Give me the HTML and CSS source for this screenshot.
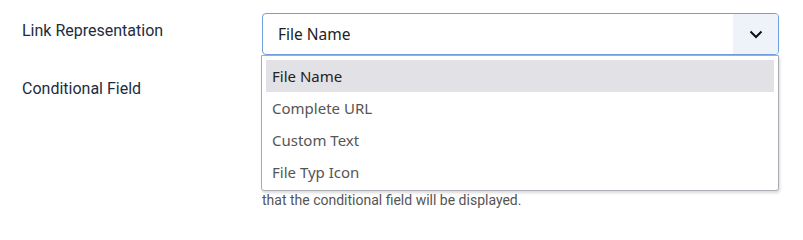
FILE: index.html
```html
<!DOCTYPE html>
<html lang="en">
<head>
  <meta charset="UTF-8" />
  <title>Field Settings</title>
  <link rel="stylesheet" href="styles.css">
</head>
<body>

  <!-- Settings form -->
  <div class="settings-form">
    <div class="form-row">
      <label class="form-label">Link Representation</label>
      <div class="form-control select-wrap">
        <div class="select is-open">
          <span class="select-value">File Name</span>
          <span class="select-arrow">
            <svg width="16" height="16" viewBox="0 0 16 16"><polyline points="2.5,5.5 8,11 13.5,5.5" fill="none" stroke="#111" stroke-width="2"/></svg>
          </span>
        </div>
        <ul class="dropdown">
          <li class="active">File Name</li>
          <li>Complete URL</li>
          <li>Custom Text</li>
          <li>File Typ Icon</li>
        </ul>
      </div>
    </div>

    <div class="form-row">
      <label class="form-label">Conditional Field</label>
      <div class="form-control">
        <!-- covered by the open dropdown above -->
        <div class="select">
          <span class="select-value"></span>
          <span class="select-arrow"></span>
        </div>
        <p class="help-text">that the conditional field will be displayed.</p>
      </div>
    </div>
  </div>

</body>
</html>
```

FILE: styles.css
```css
body {
  margin: 0;
  background-color: white;
  font-family: Roboto, "Liberation Sans", sans-serif;
}

.settings-form {
  padding: 13px 24px 0 22px;
}

.form-row {
  display: grid;
  grid-template-columns: 240px 1fr;
  margin-bottom: 16px;
}

.form-label {
  padding-top: 8px;
  font-size: 16px;
  line-height: 20px;
  color: #1d2c40;
}

.select-wrap {
  position: relative;
}

.select {
  display: flex;
  align-items: stretch;
  height: 42px;
  box-sizing: border-box;
  border: 1px solid #cfd6df;
  border-radius: 4px;
  background-color: white;
  overflow: hidden;
}

.select.is-open {
  border-color: #6f9fde;
}

.select-value {
  flex: 1;
  display: flex;
  align-items: center;
  padding-left: 15px;
  font-family: "Noto Sans", "Open Sans", sans-serif;
  font-size: 15.5px;
  color: #222;
}

.select-arrow {
  width: 45px;
  display: flex;
  align-items: center;
  justify-content: center;
  background-color: #eef3fa;
}

.dropdown {
  position: absolute;
  top: 42px;
  left: -1px;
  right: 0;
  margin: 0;
  padding: 4px 4px 2px;
  list-style: none;
  background-color: white;
  border: 1px solid #a9adb3;
  border-radius: 0 0 3px 3px;
  box-shadow: 1px 2px 3px rgba(0, 0, 0, 0.15);
}

.dropdown li {
  height: 32px;
  line-height: 32px;
  padding-left: 6px;
  font-family: "Noto Sans", "Open Sans", sans-serif;
  font-size: 15px;
  color: #555;
}

.dropdown li.active {
  background-color: #e2e1e6;
  color: #222;
}

.help-text {
  margin: 78px 0 0;
  font-size: 14px;
  line-height: 18px;
  color: #555;
}
```
